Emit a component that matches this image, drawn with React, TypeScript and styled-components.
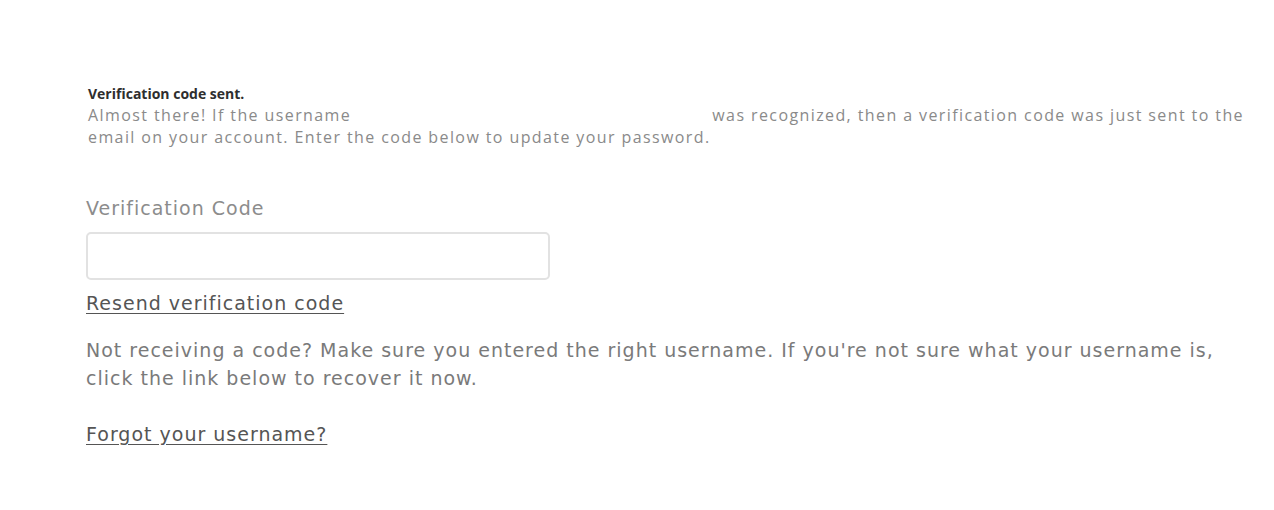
import React from "react";
import styled, { createGlobalStyle } from "styled-components";

const Global = createGlobalStyle`
  html, body { margin: 0; padding: 0; background: #ffffff; }
  body { width: 1274px; height: 510px; overflow: hidden; }
`;

const Page = styled.main`
  box-sizing: border-box;
  width: 1274px;
  height: 510px;
  padding: 84px 0 0 88px;
  display: flex;
  flex-direction: column;
`;

const Notice = styled.section`
  width: 1180px;
  font-family: "Open Sans", "Noto Sans", sans-serif;
  color: #8a8a8a;
  font-size: 16px;
  letter-spacing: 1.4px;
  line-height: 22px;
`;

const NoticeTitle = styled.h2`
  margin: 0;
  font-family: "Open Sans", "Noto Sans", sans-serif;
  font-size: 14px;
  font-weight: 700;
  letter-spacing: 0;
  color: #2e2e2e;
  line-height: 20px;
`;

const NoticeText = styled.p`
  margin: 0;
`;

const Hidden = styled.span`
  display: inline-block;
  width: 350px;
`;

const Field = styled.div`
  display: flex;
  flex-direction: column;
  margin-top: 48px;
`;

const Label = styled.label`
  font-family: "DejaVu Sans", sans-serif;
  font-size: 19px;
  letter-spacing: 1px;
  color: #8c8c8c;
  line-height: 24px;
  margin-left: -2px;
`;

const Input = styled.input`
  box-sizing: border-box;
  width: 464px;
  height: 48px;
  margin: 12px 0 0 -2px;
  border: 2px solid #e2e2e2;
  border-radius: 5px;
  background: #fff;
  outline: none;
`;

const Link = styled.a<{ $top: number }>`
  display: inline-block;
  align-self: flex-start;
  margin-top: ${(p) => p.$top}px;
  margin-left: -2px;
  font-family: "DejaVu Sans", sans-serif;
  font-size: 19px;
  letter-spacing: 1px;
  line-height: 24px;
  color: #555;
  text-decoration: underline;
  text-underline-offset: 3px;
`;

const Help = styled.p`
  margin: 21px 0 0 -2px;
  width: 1160px;
  font-family: "DejaVu Sans", sans-serif;
  font-size: 19px;
  letter-spacing: 1px;
  line-height: 28px;
  color: #7a7a7a;
`;

export default function App() {
  return (
    <>
      <Global />
      <Page>
        <Notice>
          <NoticeTitle>Verification code sent.</NoticeTitle>
          <NoticeText>
            Almost there! If the username <Hidden /> was recognized, then a verification code was just sent to the
            email on your account. Enter the code below to update your password.
          </NoticeText>
        </Notice>
        <Field>
          <Label htmlFor="code">Verification Code</Label>
          <Input id="code" type="text" />
        </Field>
        <Link href="#" $top={11}>Resend verification code</Link>
        <Help>
          Not receiving a code? Make sure you entered the right username. If you're not sure what your username is,
          click the link below to recover it now.
        </Help>
        <Link href="#" $top={30}>Forgot your username?</Link>
      </Page>
    </>
  );
}
